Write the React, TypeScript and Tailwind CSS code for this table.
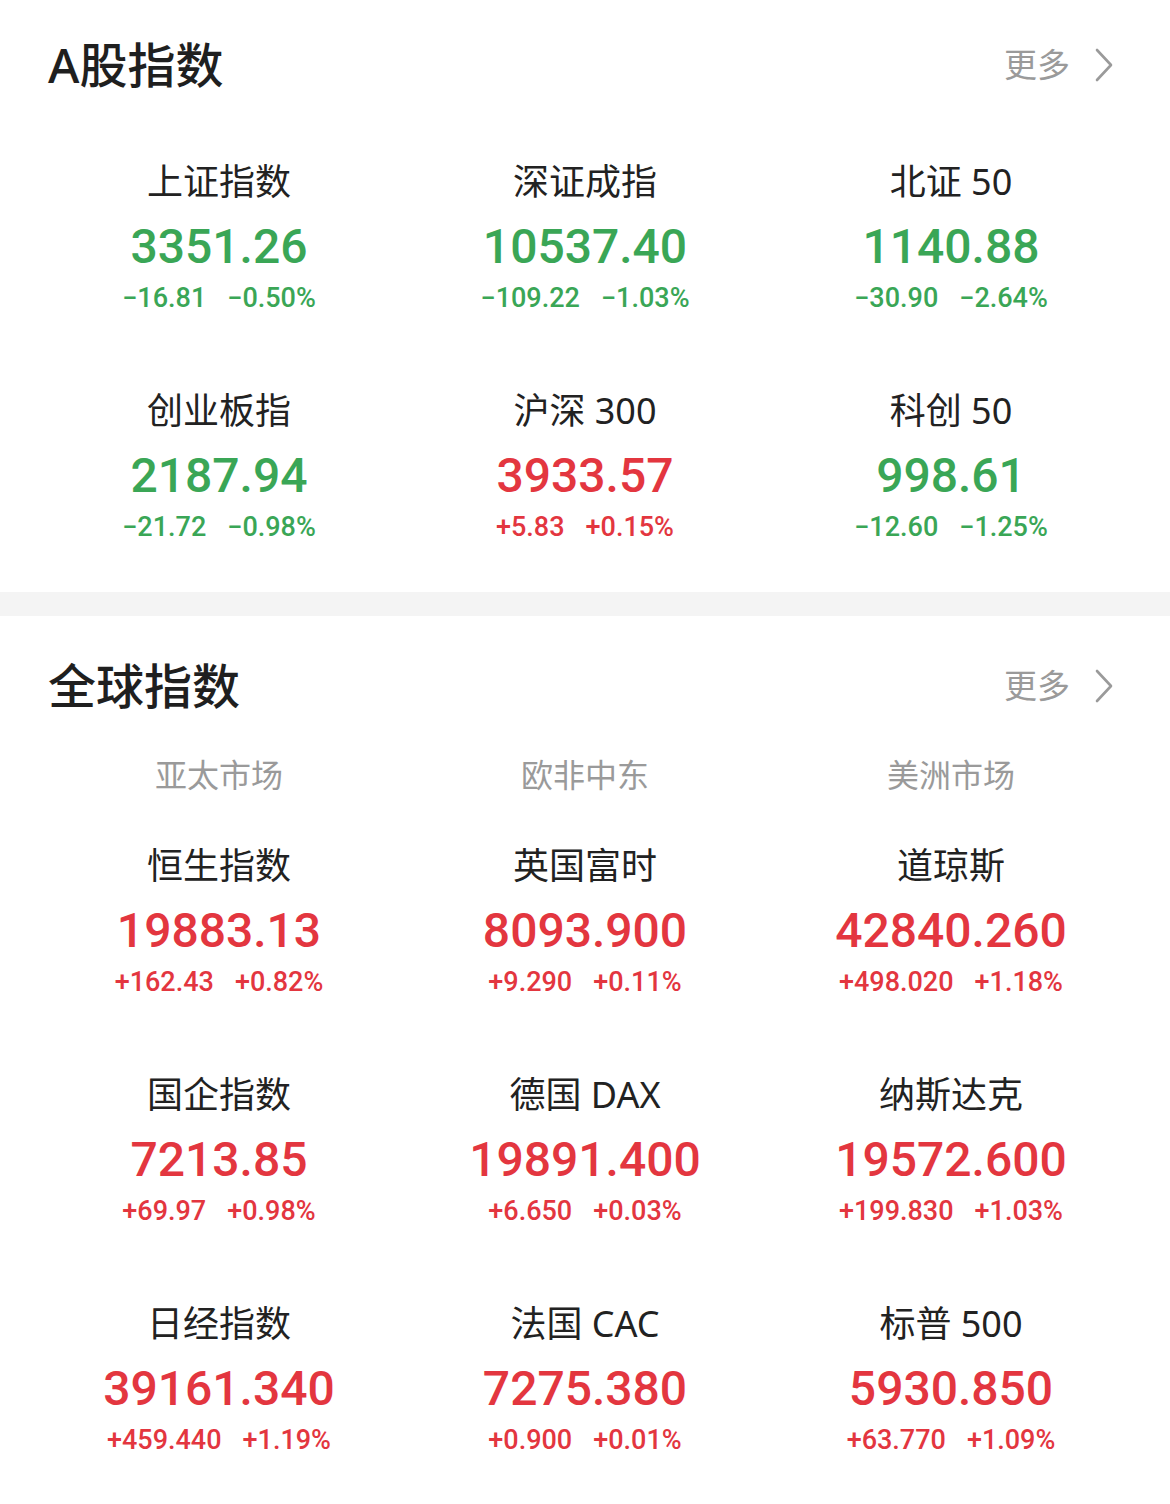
import React from "react";

type Quote = { name: string; price: string; change: string; pct: string; up: boolean };

const aShares: Quote[] = [
  { name: "上证指数", price: "3351.26", change: "−16.81", pct: "−0.50%", up: false },
  { name: "深证成指", price: "10537.40", change: "−109.22", pct: "−1.03%", up: false },
  { name: "北证 50", price: "1140.88", change: "−30.90", pct: "−2.64%", up: false },
  { name: "创业板指", price: "2187.94", change: "−21.72", pct: "−0.98%", up: false },
  { name: "沪深 300", price: "3933.57", change: "+5.83", pct: "+0.15%", up: true },
  { name: "科创 50", price: "998.61", change: "−12.60", pct: "−1.25%", up: false },
];

const globalIdx: Quote[] = [
  { name: "恒生指数", price: "19883.13", change: "+162.43", pct: "+0.82%", up: true },
  { name: "英国富时", price: "8093.900", change: "+9.290", pct: "+0.11%", up: true },
  { name: "道琼斯", price: "42840.260", change: "+498.020", pct: "+1.18%", up: true },
  { name: "国企指数", price: "7213.85", change: "+69.97", pct: "+0.98%", up: true },
  { name: "德国 DAX", price: "19891.400", change: "+6.650", pct: "+0.03%", up: true },
  { name: "纳斯达克", price: "19572.600", change: "+199.830", pct: "+1.03%", up: true },
  { name: "日经指数", price: "39161.340", change: "+459.440", pct: "+1.19%", up: true },
  { name: "法国 CAC", price: "7275.380", change: "+0.900", pct: "+0.01%", up: true },
  { name: "标普 500", price: "5930.850", change: "+63.770", pct: "+1.09%", up: true },
];

const cjk = "font-['Noto_Sans','Noto_Sans_CJK_SC',sans-serif]";
const num = "font-['Roboto','Noto_Sans_CJK_SC',sans-serif]";

function Header({ title }: { title: string }) {
  return (
    <div className="flex items-center justify-between pl-[48px] pr-[56px]">
      <h2 className={`${cjk} text-[48px] leading-[58px] font-medium text-[#1f1f1f]`}>{title}</h2>
      <div className="flex items-center gap-[24px] text-[#9a9a9a]">
        <span className={`${cjk} text-[33px] leading-[40px]`}>更多</span>
        <svg width="20" height="34" viewBox="0 0 20 34" fill="none">
          <path d="M3 2 L17 17 L3 32" stroke="#9a9a9a" strokeWidth="2.6" strokeLinecap="round" strokeLinejoin="round" />
        </svg>
      </div>
    </div>
  );
}

function Cell({ q }: { q: Quote }) {
  const color = q.up ? "text-[#e3363f]" : "text-[#3aa656]";
  return (
    <div className="flex flex-col items-center">
      <div className={`${cjk} text-[36px] leading-[44px] text-[#222]`}>{q.name}</div>
      <div className={`${num} ${color} mt-[15px] text-[48px] leading-[56px] font-medium`}>{q.price}</div>
      <div className={`${num} ${color} mt-[6px] flex gap-[21px] text-[27px] leading-[34px] font-medium`}>
        <span>{q.change}</span>
        <span>{q.pct}</span>
      </div>
    </div>
  );
}

export default function App() {
  return (
    <div className="w-[1170px] min-h-[1504px] bg-white">
      <section className="pt-[36px] pb-[48px]">
        <Header title="A股指数" />
        <div className="mt-[66px] grid grid-cols-3 gap-y-[74px] px-[36px]">
          {aShares.map((q) => (
            <Cell key={q.name} q={q} />
          ))}
        </div>
      </section>
      <div className="h-[24px] bg-[#f4f4f4]" />
      <section className="pt-[41px] pb-[40px]">
        <Header title="全球指数" />
        <div className={`${cjk} mt-[39px] grid grid-cols-3 px-[36px] text-[32px] leading-[42px] text-[#9a9a9a]`}>
          <div className="text-center">亚太市场</div>
          <div className="text-center">欧非中东</div>
          <div className="text-center">美洲市场</div>
        </div>
        <div className="mt-[48px] grid grid-cols-3 gap-y-[74px] px-[36px]">
          {globalIdx.map((q) => (
            <Cell key={q.name} q={q} />
          ))}
        </div>
      </section>
    </div>
  );
}
